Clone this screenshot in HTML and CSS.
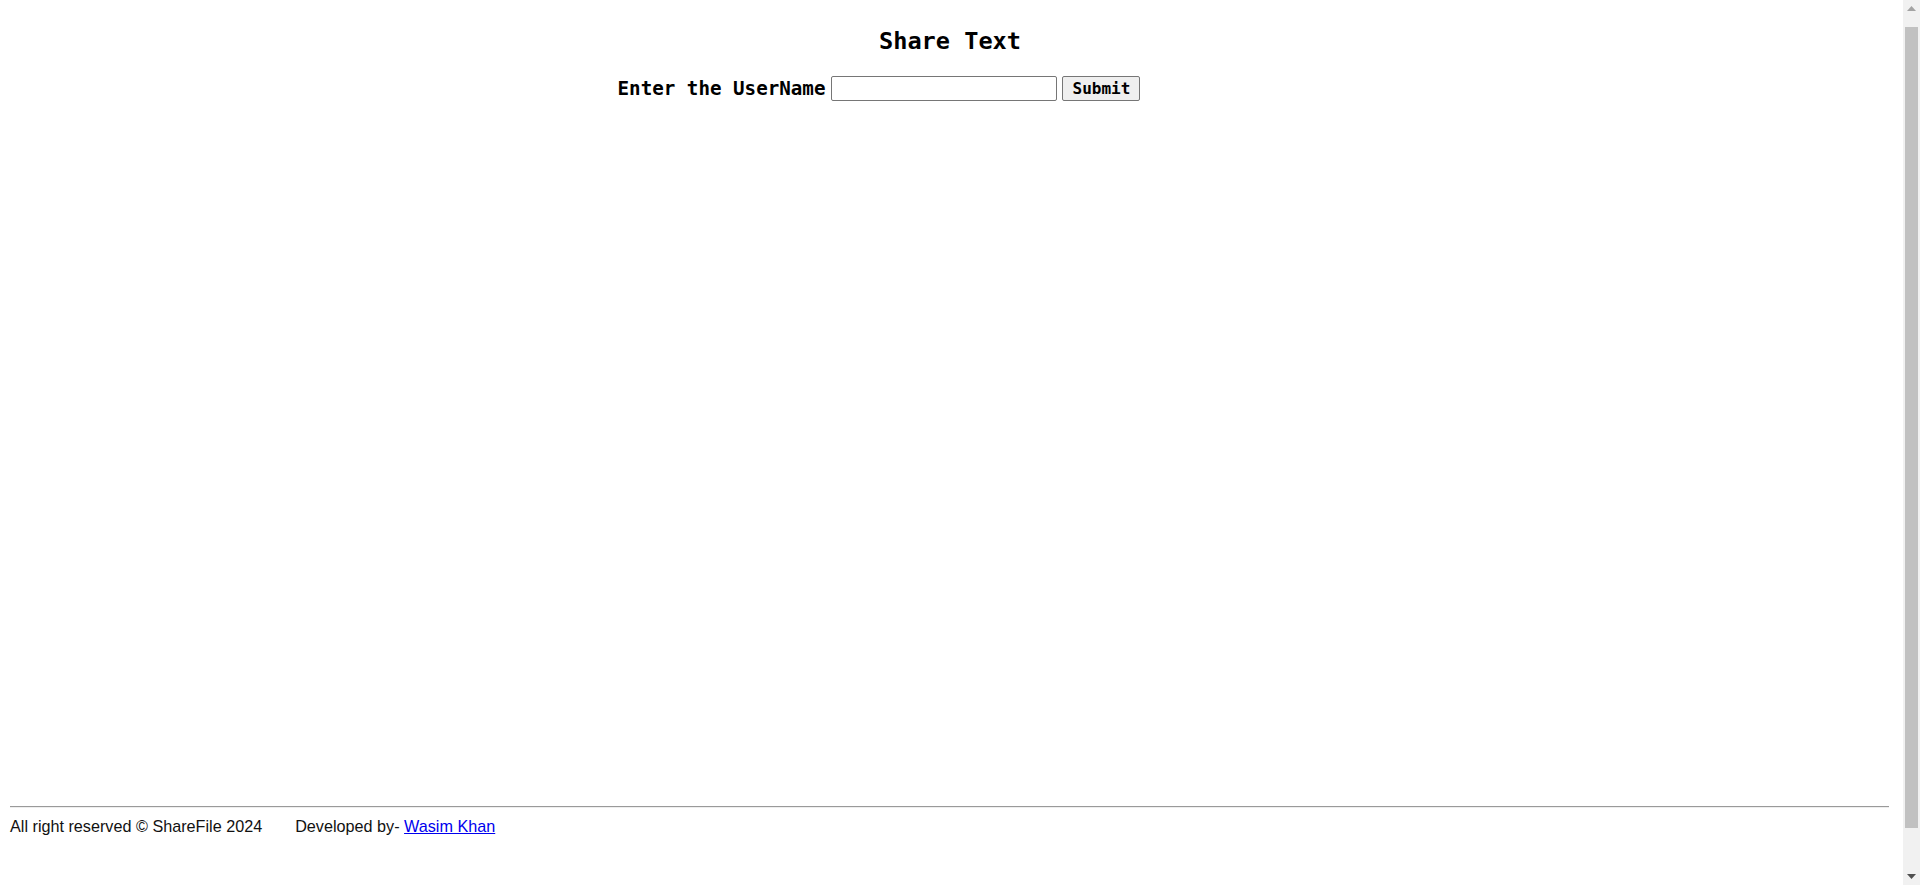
FILE: index.html
```html
<!DOCTYPE html>
<html lang="en">
<head>
<meta charset="utf-8">
<title>Share Text</title>
<link rel="stylesheet" href="styles.css">
</head>
<body>
<div class="viewport">
  <div class="page">
    <main class="main">
      <h2 class="title">Share Text</h2>
      <form class="user-form" onsubmit="return false;">
        <label class="user-label" for="username">Enter the UserName</label>
        <input class="user-input" id="username" type="text">
        <button class="submit-btn" type="submit">Submit</button>
      </form>
    </main>
    <footer class="footer">
      <div class="footer-rule"></div>
      <div class="footer-text">
        <span class="copy">All right reserved © ShareFile 2024</span>
        <span class="dev">Developed by- <a class="dev-link" href="#">Wasim Khan</a></span>
      </div>
    </footer>
  </div>
  <div class="scrollbar" aria-hidden="true">
    <div class="sb-btn">
      <svg width="9" height="5" viewBox="0 0 9 5"><polygon points="4.5,0 9,5 0,5" fill="#a3a3a3"/></svg>
    </div>
    <div class="sb-track">
      <div class="sb-thumb"></div>
    </div>
    <div class="sb-btn">
      <svg width="9" height="5" viewBox="0 0 9 5"><polygon points="0,0 9,0 4.5,5" fill="#505050"/></svg>
    </div>
  </div>
</div>
</body>
</html>
```

FILE: styles.css
```css
html, body {
  margin: 0;
  padding: 0;
  background: #ffffff;
  overflow: hidden;
}

.viewport {
  display: flex;
  height: 100vh;
}

.page {
  flex: 1;
  display: flex;
  flex-direction: column;
  padding: 0 8px;
  min-width: 0;
}

.main {
  display: flex;
  flex-direction: column;
  flex: 1;
}

.title {
  margin: 27px 0 0;
  padding-right: 3px;
  font-family: "DejaVu Sans Mono", "Liberation Mono", monospace;
  font-size: 23.6px;
  font-weight: bold;
  line-height: 28px;
  text-align: center;
  color: #000;
}

.user-form {
  display: flex;
  align-items: center;
  justify-content: center;
  gap: 5px;
  margin-top: 21px;
  padding-right: 145px;
}

.user-label {
  font-family: "DejaVu Sans Mono", "Liberation Mono", monospace;
  font-size: 19.2px;
  font-weight: bold;
  color: #000;
  line-height: 22px;
  margin-top: 1px;
}

.user-input {
  box-sizing: border-box;
  width: 226px;
  height: 25px;
  margin: 0 0 0 1px;
  padding: 1px 2px;
  border: 1px solid #767676;
  border-radius: 2px;
  background: #fff;
}

.submit-btn {
  box-sizing: border-box;
  width: 78px;
  height: 25px;
  margin: 0;
  padding: 0 6px;
  border: 1px solid #767676;
  border-radius: 2px;
  background: #efefef;
  font-family: "DejaVu Sans Mono", "Liberation Mono", monospace;
  font-size: 16px;
  font-weight: bold;
  color: #000;
}

.footer {
  padding: 0 6px 49px 2px;
}

.footer-rule {
  height: 0;
  border-top: 1px solid #9a9a9a;
  border-bottom: 1px solid #eeeeee;
}

.footer-text {
  display: flex;
  gap: 33px;
  margin-top: 9px;
  font-family: "Liberation Sans", Arial, sans-serif;
  font-size: 16.2px;
  line-height: 19px;
  color: #111;
}

.dev-link {
  color: #0000ee;
  text-decoration: underline;
}

.scrollbar {
  width: 17px;
  flex: none;
  display: flex;
  flex-direction: column;
  background: #f1f1f1;
}

.sb-btn {
  height: 17px;
  display: flex;
  align-items: center;
  justify-content: center;
}

.sb-track {
  flex: 1;
  padding: 10px 2px 40px;
  display: flex;
  flex-direction: column;
}

.sb-thumb {
  flex: 1;
  background: #c1c1c1;
}
```
